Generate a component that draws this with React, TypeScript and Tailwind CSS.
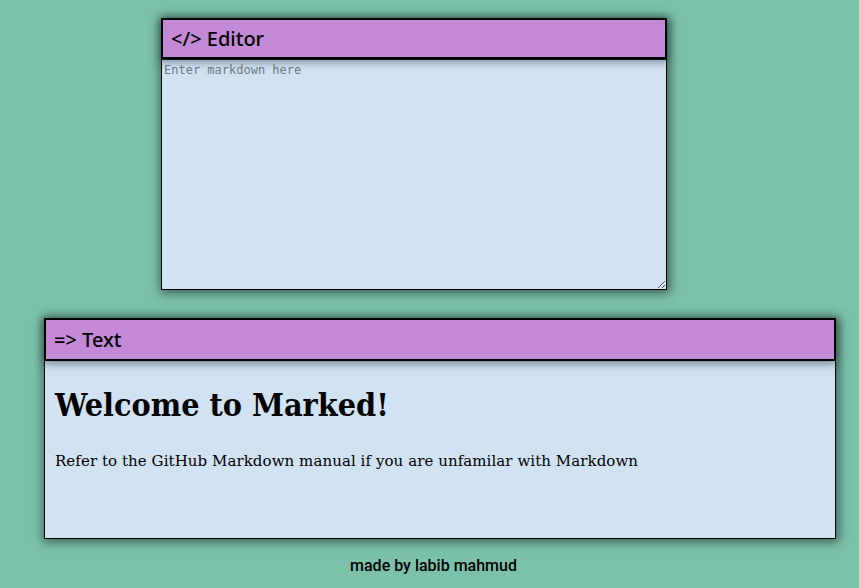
import React from 'react';

const welcome = 'Refer to the GitHub Markdown manual if you are unfamilar with Markdown';

export default function App() {
  return (
    <div className="min-h-screen bg-[#7cc2ab] flex flex-col items-start pt-[18px] font-['Noto_Sans',sans-serif]">
      {/* Editor */}
      <div className="ml-[161px] w-[506px] shadow-[1px_1px_10px_2px_#3a5f56]">
        <div className="relative z-10 h-[41px] border-2 border-black bg-[#c389d7] flex items-center px-2 text-[20px] font-medium text-black shadow-[0_2px_8px_1px_rgba(40,60,70,0.55)]">
          <span>&lt;/&gt; Editor</span>
        </div>
        <textarea
          placeholder="Enter markdown here"
          className="block w-full h-[231px] border border-black bg-[#d1e3f3] px-[2px] py-[1px] text-[12px] leading-[18px] font-['DejaVu_Sans_Mono',monospace] placeholder:text-[#6f7b86] outline-none"
        />
      </div>

      {/* Preview */}
      <div className="ml-[44px] mt-[28px] w-[792px] shadow-[1px_1px_10px_2px_#3a5f56]">
        <div className="relative z-10 h-[43px] border-2 border-black bg-[#c389d7] flex items-center px-2 text-[20px] font-medium text-black shadow-[0_2px_8px_1px_rgba(40,60,70,0.55)]">
          <span>=&gt; Text</span>
        </div>
        <div className="h-[178px] border border-black border-t-0 bg-[#d1e3f3] px-[10px] pt-[22px] text-black">
          <h1 className="text-[32px] font-bold leading-[44px] font-['DejaVu_Serif_Condensed','DejaVu_Serif',serif]">
            Welcome to Marked!
          </h1>
          <p className="mt-[22px] text-[15px] leading-[24px] tracking-[0.07px] font-['DejaVu_Serif',serif]">{welcome}</p>
        </div>
      </div>

      {/* Footer */}
      <div className="w-full mt-[14px] text-center">
        <span className="inline-block ml-[8px] text-[16px] font-medium font-['Roboto',sans-serif] text-black">
          made by labib mahmud
        </span>
      </div>
    </div>
  );
}
